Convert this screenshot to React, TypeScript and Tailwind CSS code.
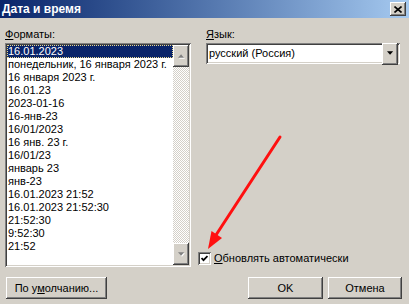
import React from 'react';

const formats = [
  '16.01.2023',
  'понедельник, 16 января 2023 г.',
  '16 января 2023 г.',
  '16.01.23',
  '2023-01-16',
  '16-янв-23',
  '16/01/2023',
  '16 янв. 23 г.',
  '16/01/23',
  'январь 23',
  'янв-23',
  '16.01.2023 21:52',
  '16.01.2023 21:52:30',
  '21:52:30',
  '9:52:30',
  '21:52',
];

// classic 3d borders
const sunken =
  'shadow-[inset_1px_1px_#808080,inset_-1px_-1px_#ffffff,inset_2px_2px_#404040,inset_-2px_-2px_#d4d0c8]';
const raised =
  'shadow-[inset_-1px_-1px_#404040,inset_1px_1px_#ffffff,inset_-2px_-2px_#808080,inset_2px_2px_#d4d0c8]';

function ArrowGlyph({ down, gray }: { down?: boolean; gray?: boolean }) {
  const pts = down ? '0,0 7,0 3.5,4' : '3.5,0 7,4 0,4';
  return (
    <svg width="7" height="5" viewBox="0 0 8 5">
      {gray && <polygon points={pts} fill="#ffffff" transform="translate(1,1)" />}
      <polygon points={pts} fill={gray ? '#808080' : '#000000'} />
    </svg>
  );
}

function Btn({ children, className }: { children: React.ReactNode; className?: string }) {
  return (
    <div className={`h-[22px] bg-[#d4d0c8] flex items-center justify-center ${raised} ${className ?? ''}`}>
      {children}
    </div>
  );
}

export default function App() {
  return (
    <div className="relative w-[409px] h-[304px] overflow-hidden bg-[#d4d0c8] font-['Liberation_Sans',sans-serif] text-[11px] leading-[13px] text-black">
      {/* Title bar */}
      <div className="h-[18px] flex items-center justify-between pl-[2px] pr-[3px] bg-gradient-to-r from-[#0a246a] to-[#a6caf0]">
        <span className="text-white font-bold text-[12px] leading-[18px]">Дата и время</span>
        <div className={`w-[16px] h-[14px] bg-[#d4d0c8] flex items-center justify-center ${raised}`}>
          <svg width="8" height="7" viewBox="0 0 8 7">
            <path d="M0.5 0.5 L7.5 6.5 M7.5 0.5 L0.5 6.5" stroke="#000" strokeWidth="1.6" />
          </svg>
        </div>
      </div>

      <div className="flex pl-[5px] pt-[10px]">
        {/* Formats */}
        <div className="w-[186px] flex flex-col">
          <div className="h-[13px] mb-[2px]">
            <span className="underline">Ф</span>орматы:
          </div>
          <div className={`h-[224px] bg-white p-[2px] flex ${sunken}`}>
            <div className="flex-1 flex flex-col">
              {formats.map((f, i) => (
                <div
                  key={f}
                  className={
                    i === 0
                      ? 'h-[13px] pl-[1px] bg-[#0a246a] text-white outline-1 outline-dotted outline-[#e8d890] -outline-offset-1 whitespace-nowrap'
                      : 'h-[13px] pl-[1px] whitespace-nowrap'
                  }
                >
                  {f}
                </div>
              ))}
            </div>
            <div className="w-[16px] flex flex-col bg-[image:repeating-conic-gradient(#ffffff_0_25%,#d4d0c8_0_50%)] bg-[length:2px_2px]">
              <Btn className="h-[16px]">
                <ArrowGlyph gray />
              </Btn>
              <div className="flex-1" />
              <Btn className="h-[16px]">
                <ArrowGlyph down gray />
              </Btn>
            </div>
          </div>
        </div>

        {/* Language + checkbox */}
        <div className="ml-[7px] w-[202px] flex flex-col">
          <div className="ml-[8px] h-[13px] mb-[2px]">
            <span className="underline">Я</span>зык:
          </div>
          <div className={`ml-[8px] h-[21px] bg-white p-[2px] flex items-center ${sunken}`}>
            <span className="flex-1 pl-[1px]">русский (Россия)</span>
            <Btn className="w-[16px] h-[17px]">
              <ArrowGlyph down />
            </Btn>
          </div>
          <div className="mt-auto mb-[2px] flex items-center gap-[3px]">
            <div className={`w-[13px] h-[13px] bg-white flex items-center justify-center ${sunken}`}>
              <svg width="7" height="7" viewBox="0 0 7 7">
                <path d="M0.5 3 L2.5 5.2 L6.5 1" stroke="#000" strokeWidth="1.8" fill="none" />
              </svg>
            </div>
            <span>
              <span className="underline">О</span>бновлять автоматически
            </span>
          </div>
        </div>
      </div>

      {/* Buttons */}
      <div className="flex items-center mt-[10px] pl-[6px] pr-[7px]">
        <Btn className="w-[101px]">
          <span>
            По у<span className="underline">м</span>олчанию...
          </span>
        </Btn>
        <div className="flex-1" />
        <Btn className="w-[75px] mr-[5px]">OK</Btn>
        <Btn className="w-[74px]">Отмена</Btn>
      </div>

      {/* red annotation arrow */}
      <svg className="absolute left-0 top-0 pointer-events-none" width="409" height="304">
        <line x1="280" y1="137" x2="216" y2="235" stroke="#ff1010" strokeWidth="3" strokeLinecap="round" />
        <polygon points="208,249 222,238 211.5,231" fill="#ff1010" />
      </svg>
    </div>
  );
}
